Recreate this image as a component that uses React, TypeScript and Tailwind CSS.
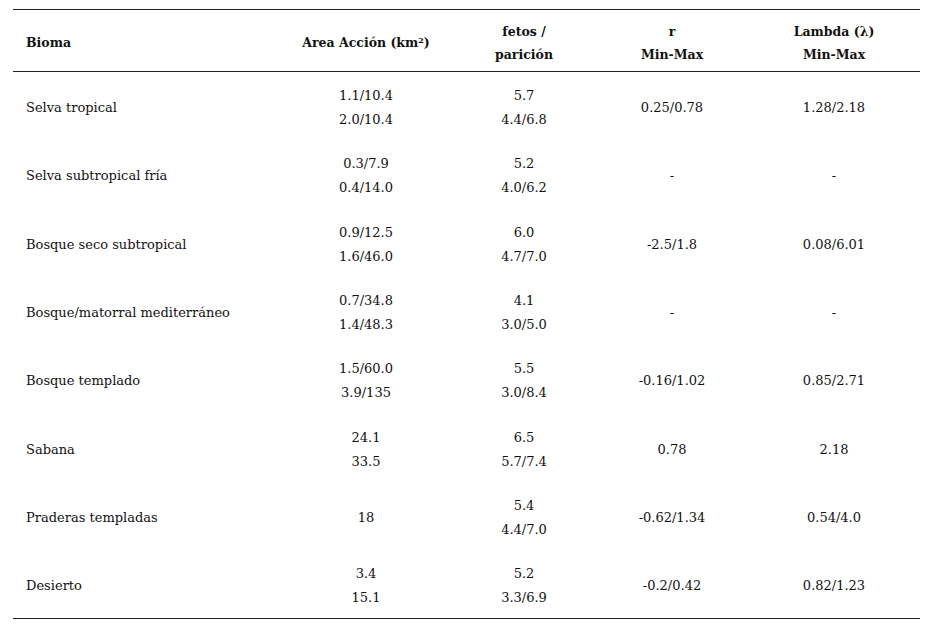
const rows = [
  { bioma: "Selva tropical", area: ["1.1/10.4", "2.0/10.4"], fetos: ["5.7", "4.4/6.8"], r: "0.25/0.78", lambda: "1.28/2.18" },
  { bioma: "Selva subtropical fría", area: ["0.3/7.9", "0.4/14.0"], fetos: ["5.2", "4.0/6.2"], r: "-", lambda: "-" },
  { bioma: "Bosque seco subtropical", area: ["0.9/12.5", "1.6/46.0"], fetos: ["6.0", "4.7/7.0"], r: "-2.5/1.8", lambda: "0.08/6.01" },
  { bioma: "Bosque/matorral mediterráneo", area: ["0.7/34.8", "1.4/48.3"], fetos: ["4.1", "3.0/5.0"], r: "-", lambda: "-" },
  { bioma: "Bosque templado", area: ["1.5/60.0", "3.9/135"], fetos: ["5.5", "3.0/8.4"], r: "-0.16/1.02", lambda: "0.85/2.71" },
  { bioma: "Sabana", area: ["24.1", "33.5"], fetos: ["6.5", "5.7/7.4"], r: "0.78", lambda: "2.18" },
  { bioma: "Praderas templadas", area: ["18"], fetos: ["5.4", "4.4/7.0"], r: "-0.62/1.34", lambda: "0.54/4.0" },
  { bioma: "Desierto", area: ["3.4", "15.1"], fetos: ["5.2", "3.3/6.9"], r: "-0.2/0.42", lambda: "0.82/1.23" },
];

const grid = "grid grid-cols-[267px_172px_144px_152px_172px] items-center";

export default function App() {
  return (
    <div className="w-[930px] h-[628px] bg-white pt-[9px] pl-[13px] font-['DejaVu_Serif',serif] text-[13px] text-[#111]">
      <div className="w-[907px] border-t-[1.5px] border-b-[1.5px] border-[#222]">
        <div className={`${grid} h-[62px] pt-[4px] border-b-[1.5px] border-[#222] font-bold text-[12.5px] leading-[23px]`}>
          <div className="pl-[13px]">Bioma</div>
          <div className="text-center">
            Area Acción (km<sup className="text-[8px]">2</sup>)
          </div>
          <div className="text-center">
            <div>fetos /</div>
            <div>parición</div>
          </div>
          <div className="text-center">
            <div>r</div>
            <div>Min-Max</div>
          </div>
          <div className="text-center">
            <div>Lambda (λ)</div>
            <div>Min-Max</div>
          </div>
        </div>
        {rows.map((row) => (
          <div key={row.bioma} className={`${grid} h-[68.3px] pt-[4px] leading-[24px]`}>
            <div className="pl-[13px]">{row.bioma}</div>
            <div className="text-center">
              {row.area.map((a) => (
                <div key={a}>{a}</div>
              ))}
            </div>
            <div className="text-center">
              {row.fetos.map((f) => (
                <div key={f}>{f}</div>
              ))}
            </div>
            <div className="text-center">{row.r}</div>
            <div className="text-center">{row.lambda}</div>
          </div>
        ))}
      </div>
    </div>
  );
}
